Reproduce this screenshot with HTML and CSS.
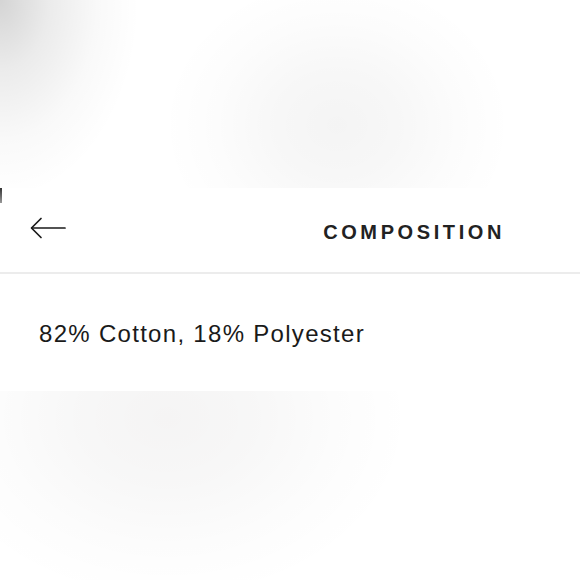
FILE: index.html
```html
<!DOCTYPE html>
<html lang="en">
<head>
<meta charset="utf-8">
<title>Composition</title>
<link rel="stylesheet" href="styles.css">
</head>
<body>
<div class="page">
  <div class="backdrop-top"></div>
  <section class="panel">
    <span class="edge-mark"></span>
    <header class="panel-header">
      <button class="back" aria-label="Back">
        <svg width="36" height="22" viewBox="0 0 36 22" fill="none" stroke="#1a1a1a" stroke-width="1.7" stroke-linecap="round" stroke-linejoin="round">
          <path d="M35 11H2"/>
          <path d="M11 1.5L1.5 11L11 20.5"/>
        </svg>
      </button>
      <h1 class="title">COMPOSITION</h1>
    </header>
    <div class="panel-body">
      <p class="composition">82% Cotton, 18% Polyester</p>
    </div>
  </section>
</div>
</body>
</html>
```

FILE: styles.css
```css
html, body {
  margin: 0;
  padding: 0;
  height: 100%;
}

body {
  font-family: "Liberation Sans", Arial, sans-serif;
  color: #1a1a1a;
  background-color: #ffffff;
  background-image:
    radial-gradient(ellipse 140px 200px at 0px 0px, rgba(0,0,0,0.17) 0%, rgba(0,0,0,0.08) 35%, rgba(0,0,0,0.025) 70%, rgba(0,0,0,0) 100%),
    radial-gradient(ellipse 175px 150px at 337px 125px, rgba(0,0,0,0.045) 0%, rgba(0,0,0,0.03) 35%, rgba(0,0,0,0.012) 70%, rgba(0,0,0,0) 100%),
    radial-gradient(ellipse 245px 185px at 167px 418px, rgba(20,0,0,0.045) 0%, rgba(10,0,0,0.03) 35%, rgba(0,0,0,0.012) 70%, rgba(0,0,0,0) 100%);
  background-repeat: no-repeat;
}

.page {
  display: flex;
  flex-direction: column;
}

.backdrop-top {
  height: 188px;
}

.panel {
  position: relative;
  background: #ffffff;
}

.edge-mark {
  position: absolute;
  left: 0;
  top: 0;
  width: 2px;
  height: 15px;
  background: linear-gradient(#333, #999);
}

.panel-header {
  height: 84px;
  display: flex;
  align-items: center;
  justify-content: space-between;
  padding: 0 75px 0 30px;
  border-bottom: 2px solid #ececec;
}

.back {
  border: 0;
  background: none;
  padding: 0;
  margin-top: -4px;
  display: flex;
  cursor: pointer;
}

.title {
  margin: 0;
  margin-top: 5px;
  font-size: 20px;
  font-weight: 700;
  letter-spacing: 3.6px;
  color: #222222;
}

.panel-body {
  height: 117px;
  display: flex;
  align-items: center;
  padding: 0 39px;
}

.composition {
  margin: 0;
  margin-top: 2px;
  font-size: 24px;
  letter-spacing: 1.3px;
  color: #1a1a1a;
}
```
